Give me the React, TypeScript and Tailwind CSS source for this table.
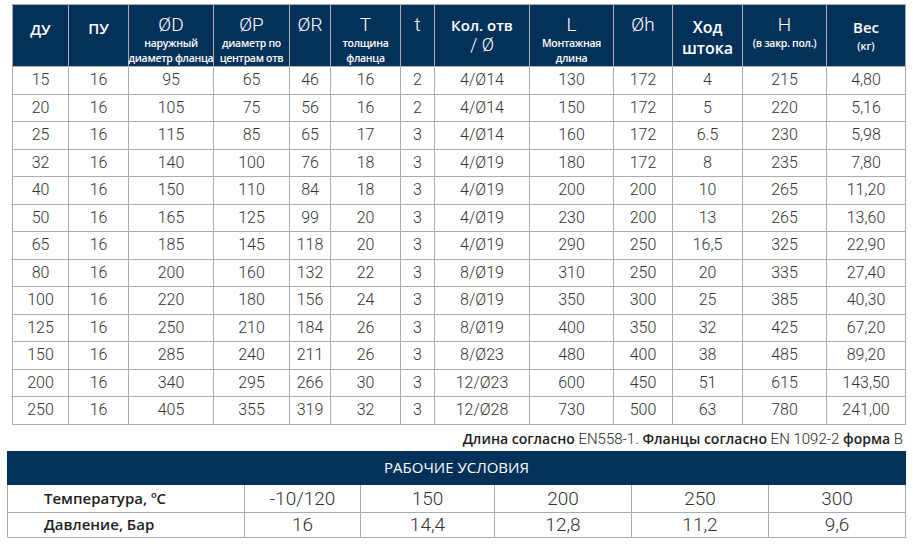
const num = "font-['Roboto',sans-serif] font-light"
const lbl = "font-['Open_Sans',sans-serif] font-semibold"

const widths = [
  'w-[56px]', 'w-[60px]', 'w-[85px]', 'w-[76px]', 'w-[41px]', 'w-[70px]', 'w-[34px]',
  'w-[95px]', 'w-[84px]', 'w-[59px]', 'w-[70px]', 'w-[84px]', 'w-[79px]',
]

const rows = [
  ['15', '16', '95', '65', '46', '16', '2', '4/Ø14', '130', '172', '4', '215', '4,80'],
  ['20', '16', '105', '75', '56', '16', '2', '4/Ø14', '150', '172', '5', '220', '5,16'],
  ['25', '16', '115', '85', '65', '17', '3', '4/Ø14', '160', '172', '6.5', '230', '5,98'],
  ['32', '16', '140', '100', '76', '18', '3', '4/Ø19', '180', '172', '8', '235', '7,80'],
  ['40', '16', '150', '110', '84', '18', '3', '4/Ø19', '200', '200', '10', '265', '11,20'],
  ['50', '16', '165', '125', '99', '20', '3', '4/Ø19', '230', '200', '13', '265', '13,60'],
  ['65', '16', '185', '145', '118', '20', '3', '4/Ø19', '290', '250', '16,5', '325', '22,90'],
  ['80', '16', '200', '160', '132', '22', '3', '8/Ø19', '310', '250', '20', '335', '27,40'],
  ['100', '16', '220', '180', '156', '24', '3', '8/Ø19', '350', '300', '25', '385', '40,30'],
  ['125', '16', '250', '210', '184', '26', '3', '8/Ø19', '400', '350', '32', '425', '67,20'],
  ['150', '16', '285', '240', '211', '26', '3', '8/Ø23', '480', '400', '38', '485', '89,20'],
  ['200', '16', '340', '295', '266', '30', '3', '12/Ø23', '600', '450', '51', '615', '143,50'],
  ['250', '16', '405', '355', '319', '32', '3', '12/Ø28', '730', '500', '63', '780', '241,00'],
]

const conditions = [
  { label: 'Температура, ºC', values: ['-10/120', '150', '200', '250', '300'] },
  { label: 'Давление, Бар', values: ['16', '14,4', '12,8', '11,2', '9,6'] },
]

function Head({ title, sub }: { title: string; sub?: string[] }) {
  return (
    <th className="border border-[#a9adb2] align-top p-0 font-normal">
      <div className="flex flex-col items-center pt-[10px] text-white">
        <span className={`${num} text-[19px] leading-[20px]`}>{title}</span>
        {sub?.map((s) => (
          <span
            key={s}
            className={`${lbl} text-[10.5px] tracking-[-0.3px] whitespace-nowrap mt-[1px] leading-[14px]`}
          >
            {s}
          </span>
        ))}
      </div>
    </th>
  )
}

function BoldHead({ lines, pt }: { lines: { text: string; cls: string }[]; pt: string }) {
  return (
    <th className="border border-[#a9adb2] align-top p-0 font-normal">
      <div className={`flex flex-col items-center text-white ${pt}`}>
        {lines.map((l) => (
          <span key={l.text} className={`whitespace-nowrap ${l.cls}`}>
            {l.text}
          </span>
        ))}
      </div>
    </th>
  )
}

export default function App() {
  return (
    <div className="w-[913px] h-[546px] bg-white text-[#333] overflow-hidden">
      {/* Main dimensions table */}
      <div className="pl-[12px] pt-[4px]">
        <table className="table-fixed border-collapse w-[893px]">
          <colgroup>
            {widths.map((w, i) => (
              <col key={i} className={w} />
            ))}
          </colgroup>
          <thead>
            <tr className="h-[62px] bg-[#04315a]">
              <BoldHead pt="pt-[14px]" lines={[{ text: 'ДУ', cls: `${lbl} text-[15px] leading-[20px]` }]} />
              <BoldHead pt="pt-[13px]" lines={[{ text: 'ПУ', cls: `${lbl} text-[15px] leading-[20px]` }]} />
              <Head title="ØD" sub={['наружный', 'диаметр фланца']} />
              <Head title="ØP" sub={['диаметр по', 'центрам отв']} />
              <Head title="ØR" />
              <Head title="T" sub={['толщина', 'фланца']} />
              <Head title="t" />
              <BoldHead
                pt="pt-[10px]"
                lines={[
                  { text: 'Кол. отв', cls: `${lbl} text-[15px] leading-[20px]` },
                  { text: '/ Ø', cls: `${num} text-[18px] leading-[20px]` },
                ]}
              />
              <Head title="L" sub={['Монтажная', 'длина']} />
              <Head title="Øh" />
              <BoldHead
                pt="pt-[12px]"
                lines={[
                  { text: 'Ход', cls: `${lbl} text-[16px] leading-[20px]` },
                  { text: 'штока', cls: `${lbl} text-[16px] leading-[20px] mt-[1px]` },
                ]}
              />
              <Head title="H" sub={['(в закр. пол.)']} />
              <BoldHead
                pt="pt-[12px]"
                lines={[
                  { text: 'Вес', cls: `${lbl} text-[15px] leading-[20px]` },
                  { text: '(кг)', cls: `${lbl} text-[10.5px] leading-[14px] mt-[2px]` },
                ]}
              />
            </tr>
          </thead>
          <tbody>
            {rows.map((r) => (
              <tr key={r[0]} className="h-[27.5px]">
                {r.map((c, i) => (
                  <td
                    key={i}
                    className={`border border-[#a9adb2] text-center p-0 text-[16px] leading-none text-[#333] ${num}`}
                  >
                    {c}
                  </td>
                ))}
              </tr>
            ))}
          </tbody>
        </table>
      </div>

      {/* Footnote */}
      <div className="flex justify-end pr-[10px] mt-[5px] text-[14px] text-[#1e1e1e] leading-[18px]">
        <span className={lbl}>Длина согласно&nbsp;</span>
        <span className={`${num} text-[15px]`}>EN558-1.&nbsp;</span>
        <span className={lbl}>Фланцы согласно&nbsp;</span>
        <span className={`${num} text-[15px]`}>EN 1092-2&nbsp;</span>
        <span className={lbl}>форма&nbsp;</span>
        <span className={`${num} text-[15px]`}>B</span>
      </div>

      {/* Working conditions */}
      <div className="pl-[7px] mt-[3px]">
        <table className="table-fixed border-collapse w-[898px]">
          <colgroup>
            <col className="w-[237px]" />
            <col className="w-[116px]" />
            <col className="w-[134px]" />
            <col className="w-[137px]" />
            <col className="w-[137px]" />
            <col className="w-[137px]" />
          </colgroup>
          <thead>
            <tr className="h-[33px] bg-[#04315a]">
              <th
                colSpan={6}
                className="border border-[#04315a] text-white text-center font-normal font-['Open_Sans',sans-serif] text-[15px]"
              >
                РАБОЧИЕ УСЛОВИЯ
              </th>
            </tr>
          </thead>
          <tbody>
            {conditions.map((row, ri) => (
              <tr key={row.label} className={ri === 0 ? 'h-[28px]' : 'h-[25px]'}>
                <td className={`border border-[#a9adb2] pl-[36px] text-[15px] text-[#1e1e1e] leading-none ${lbl}`}>
                  {row.label}
                </td>
                {row.values.map((v) => (
                  <td
                    key={v}
                    className={`border border-[#a9adb2] text-center text-[19px] leading-none text-[#333] ${num}`}
                  >
                    {v}
                  </td>
                ))}
              </tr>
            ))}
          </tbody>
        </table>
      </div>
    </div>
  )
}
